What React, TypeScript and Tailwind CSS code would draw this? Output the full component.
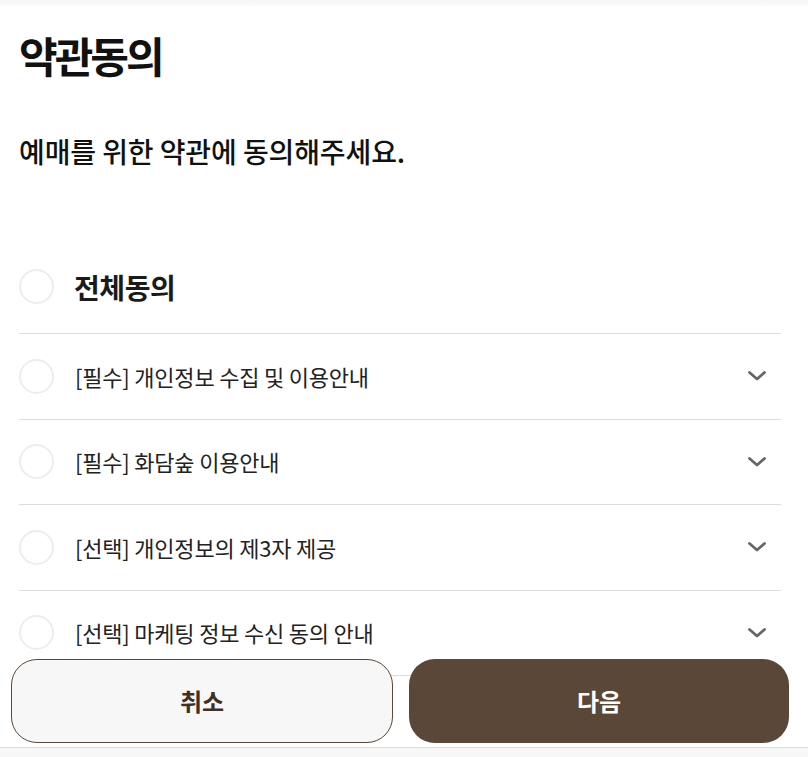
import React from "react";

const font = { fontFamily: '"Noto Sans CJK KR", "Noto Sans", sans-serif' };

function Chevron() {
  return (
    <svg width="20" height="12" viewBox="0 0 20 12" fill="none" className="shrink-0">
      <path d="M2.5 2.5 L10 9 L17.5 2.5" stroke="#666" strokeWidth="2.8" strokeLinecap="round" strokeLinejoin="round" />
    </svg>
  );
}

function Circle() {
  return <span className="block w-[35px] h-[35px] rounded-full border-2 border-[#ededed] shrink-0" />;
}

const items = [
  "[필수] 개인정보 수집 및 이용안내",
  "[필수] 화담숲 이용안내",
  "[선택] 개인정보의 제3자 제공",
  "[선택] 마케팅 정보 수신 동의 안내",
];

export default function App() {
  return (
    <div className="h-[757px] overflow-hidden bg-white text-[#222]" style={font}>
      <div className="h-[6px] bg-gradient-to-b from-[#f6f6f6] to-[#fbfbfb]" />
      <main className="pl-[19px] pr-[27px]">
        <h1 className="mt-[21px] text-[42px] leading-[56px] font-bold tracking-[-3px] text-[#111]">약관동의</h1>
        <p className="mt-[50px] text-[28px] leading-[36px] font-medium tracking-[-0.1px] text-[#111]">
          예매를 위한 약관에 동의해주세요.
        </p>
        <div className="mt-[71px]">
          <div className="flex items-center h-[94px] border-b border-[#dcdcdc]">
            <Circle />
            <span className="ml-[20px] text-[28px] font-bold tracking-[-0.4px] text-[#1a1a1a]">전체동의</span>
          </div>
          {items.map((t) => (
            <div key={t} className="flex items-center h-[85.5px] border-b border-[#dcdcdc]">
              <Circle />
              <span className="ml-[21px] flex-1 text-[22px] tracking-[-0.2px] text-[#222]">{t}</span>
              <span className="mr-[14px]">
                <Chevron />
              </span>
            </div>
          ))}
        </div>
      </main>
      <div className="fixed left-0 right-0 bottom-0">
        <div className="flex gap-[16px] pl-[11px] pr-[19px] pb-[4px]">
          <button className="flex-1 h-[84px] rounded-[26px] border border-[#5a4737] bg-[#f7f7f7] text-[24px] font-bold text-[#3f3027]">
            취소
          </button>
          <button className="flex-1 h-[84px] rounded-[26px] bg-[#5a4737] text-[24px] font-bold text-white">
            다음
          </button>
        </div>
        <div className="h-[10px] border-t border-[#dcdcdc] bg-[#f7f7f7]" />
      </div>
    </div>
  );
}
